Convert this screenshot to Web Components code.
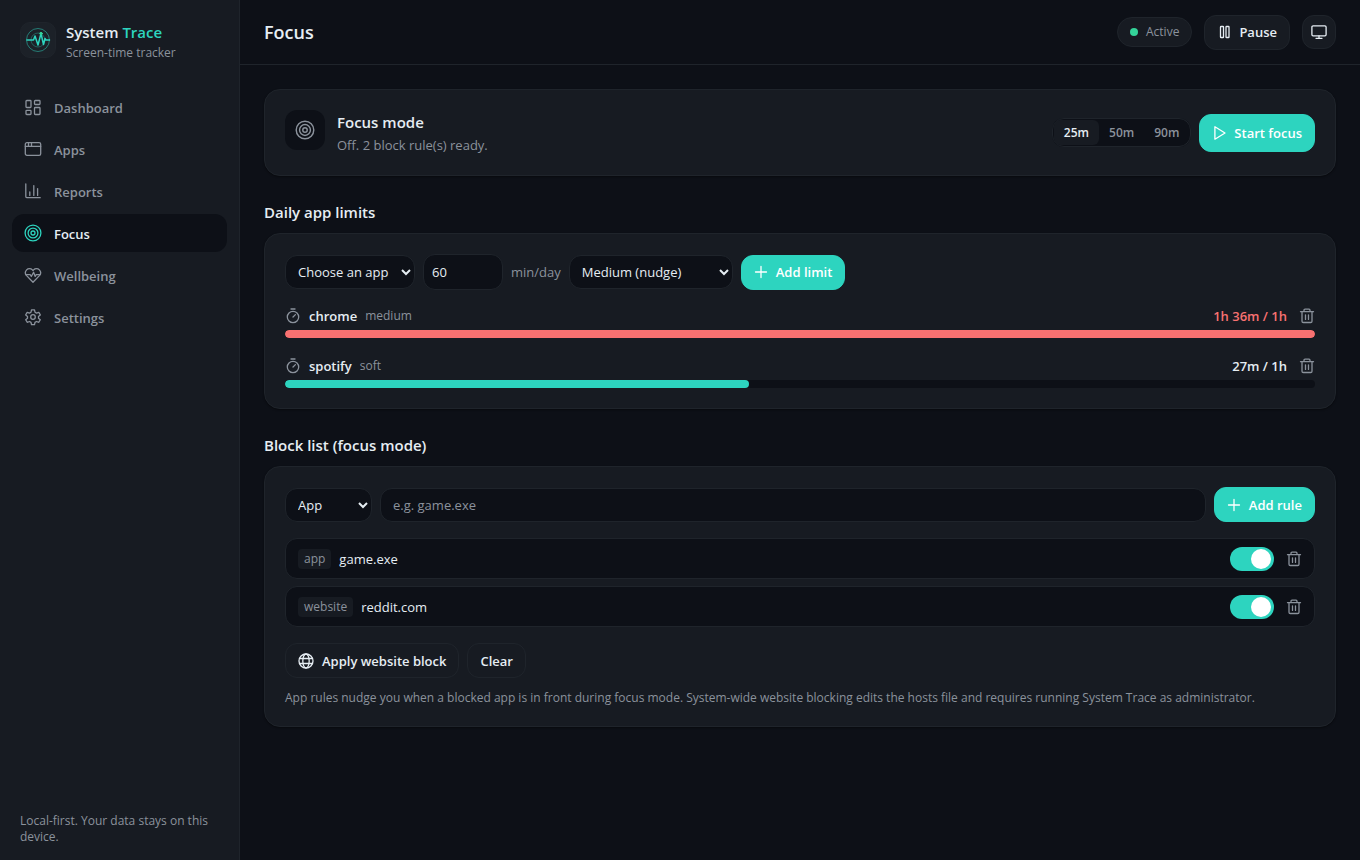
<!DOCTYPE html>
<html lang="en">
<head>
<meta charset="utf-8">
<meta name="viewport" content="width=device-width, initial-scale=1">
<title>System Trace – Focus</title>
<style>
  :root {
    color-scheme: dark;
    --bg: #0d1017;
    --panel: #171b22;
    --raised: #1c2128;
    --line: #1f242b;
    --text: #e6edf3;
    --muted: #8b929c;
    --accent: #2dd4bf;
    --danger: #f87171;
    --fs-sm: 12px;
    --fs-md: 13px;
    --fs-lg: 15px;
    --fs-xl: 18px;
  }
  body {
    margin: 0;
    background: var(--bg);
    color: var(--text);
    font: 400 13px/20px "Open Sans", "Noto Sans", sans-serif;
  }
</style>
</head>
<body>
<st-app></st-app>

<script>
const ICONS = {
  dashboard: [18, '<rect x="2" y="2.5" width="5" height="7" rx=".8"/><rect x="10.5" y="2.5" width="5.5" height="4" rx=".8"/><rect x="2" y="12.3" width="5" height="4.2" rx=".8"/><rect x="10.5" y="9.5" width="5.5" height="7" rx=".8"/>'],
  apps: [18, '<rect x="1.3" y="2.7" width="15.4" height="12.6" rx="1.6"/><path d="M1.3 6.3h15.4M4.5 2.9v3.2M7.5 2.9v3.2"/>'],
  reports: [18, '<path d="M1.8 2v12.4a1.3 1.3 0 0 0 1.3 1.3H16.2M5.8 10v3.4M9.8 3.6v9.8M13.6 6.6v6.8"/>'],
  target: [18, '<circle cx="9" cy="9" r="7.9"/><circle cx="9" cy="9" r="4.9"/><circle cx="9" cy="9" r="2"/>'],
  heart: [18, '<path d="M9 16.2 2.6 9.6a4.2 4.2 0 0 1 0-5.7 4 4 0 0 1 5.8 0L9 4.6l.6-.7a4 4 0 0 1 5.8 0 4.2 4.2 0 0 1 0 5.7z"/><path d="M1.8 8.7h4.5l1 1.8 2.3-4.3 1.6 4.2.9-1.7h4"/>'],
  gear: [18, '<circle cx="9" cy="9" r="2.3"/><path d="M7.5 1.9h3l.5 2.3 1.5.9 2.3-.8 1.5 2.6-1.8 1.5v1.8l1.8 1.5-1.5 2.6-2.3-.8-1.5.9-.5 2.3h-3L7 14.4l-1.5-.9-2.3.8-1.5-2.6 1.8-1.5V8.4L1.7 6.9l1.5-2.6 2.3.8L7 4.2z"/>'],
  pause: [16, '<rect x="3.5" y="2.5" width="3" height="11" rx=".6"/><rect x="9" y="2.5" width="3" height="11" rx=".6"/>'],
  monitor: [16, '<rect x=".9" y="1.8" width="14.2" height="10" rx="1.2"/><path d="M8 11.8v2.4M5 14.3h6"/>'],
  play: [16, '<path d="M2.9 1.8v12.4L13 8z"/>'],
  plus: [14, '<path d="M7 1.5v11M1.5 7h11"/>'],
  timer: [16, '<circle cx="8" cy="9" r="5.7"/><path d="m8 9 2.4-2.4M6 1h4"/>'],
  trash: [16, '<path d="M1.5 3.7h13M5 3.5V2.2c0-.6.4-1 1-1h4c.6 0 1 .4 1 1v1.3M3 3.9v9.3c0 .8.5 1.3 1.3 1.3h7.4c.8 0 1.3-.5 1.3-1.3V3.9M6.5 6.8v4.6M9.5 6.8v4.6"/>'],
  globe: [16, '<circle cx="8" cy="8" r="7"/><ellipse cx="8" cy="8" rx="3.2" ry="7"/><path d="M1.5 5.5h13M1.5 10.5h13"/>']
};

function define(name, markup, setup) {
  const template = document.createElement('template');
  template.innerHTML = markup;
  customElements.define(name, class extends HTMLElement {
    constructor() {
      super();
      this.attachShadow({ mode: 'open' }).append(template.content.cloneNode(true));
    }
    connectedCallback() {
      if (setup && !this.ready) { this.ready = true; setup(this, this.shadowRoot); }
    }
  });
}

define('st-icon', `
  <style>
    :host { display: inline-flex; flex: none; }
    svg { display: block; fill: none; stroke: currentColor; stroke-width: 1.3; stroke-linejoin: round; stroke-linecap: round; }
  </style>
  <svg aria-hidden="true"></svg>`, (el, root) => {
  const [box, shape] = ICONS[el.getAttribute('name')];
  const size = el.getAttribute('size') || box;
  const svg = root.querySelector('svg');
  svg.setAttribute('viewBox', `0 0 ${box} ${box}`);
  svg.setAttribute('width', size);
  svg.setAttribute('height', size);
  svg.innerHTML = shape;
});

define('st-button', `
  <style>
    :host { display: inline-flex; flex: none; }
    button {
      display: flex; align-items: center; justify-content: center; gap: 8px;
      box-sizing: border-box; height: 35px; padding: 0 12px; margin: 0;
      border: 1px solid var(--line); border-radius: 12px;
      background: var(--panel); color: var(--text);
      font: 600 var(--fs-md)/20px "Open Sans", "Noto Sans", sans-serif; white-space: nowrap; cursor: pointer;
    }
    :host([kind="primary"]) button { background: var(--accent); border-color: var(--accent); color: #fff; }
    :host([size="large"]) button { height: 38px; }
    :host([tight]) button { gap: 6px; }
    :host([kind="square"]) button { width: 34px; height: 34px; padding: 0; }
    :host([kind="bare"]) button { height: 16px; padding: 0; border: 0; background: none; color: var(--muted); }
  </style>
  <button type="button"><slot></slot></button>`, (el, root) => {
  if (el.title) root.querySelector('button').setAttribute('aria-label', el.title);
});

define('st-nav-item', `
  <style>
    :host { display: block; }
    a {
      display: flex; align-items: center; gap: 12px; height: 38px; padding: 0 12px;
      border-radius: 12px; color: var(--muted); text-decoration: none;
      font-size: var(--fs-md); font-weight: 600;
    }
    :host([active]) a { background: var(--bg); color: var(--text); }
    :host([active]) st-icon { color: var(--accent); }
    span { padding-top: 2px; }
  </style>
  <a href="#"><span><slot></slot></span></a>`, (el, root) => {
  const link = root.querySelector('a');
  const icon = document.createElement('st-icon');
  icon.setAttribute('name', el.getAttribute('icon'));
  link.prepend(icon);
  if (el.hasAttribute('active')) link.setAttribute('aria-current', 'page');
});

define('st-logo', `
  <style>
    :host { display: flex; align-items: center; justify-content: center; box-sizing: border-box; width: 36px; height: 36px; border-radius: 10px; background: var(--raised); border: 1px solid var(--line); }
  </style>
  <svg width="26" height="26" viewBox="0 0 26 26" fill="none" stroke="#2dd4bf" stroke-linecap="round" stroke-linejoin="round" aria-hidden="true">
    <circle cx="13" cy="13" r="11.5" opacity=".5"/>
    <circle cx="13" cy="13" r="7" opacity=".35"/>
    <path d="M2 13h6.5L10 9l3 9 3-11.500 2.500 11L20 11.500l1 1.500h3.500" stroke-width="1.5"/>
    <circle cx="16" cy="6.5" r="1.2" fill="#34d399" stroke="#34d399"/>
  </svg>`);

define('st-sidebar', `
  <style>
    :host { display: flex; flex-direction: column; box-sizing: border-box; background: var(--panel); border-right: 1px solid var(--line); }
    .brand { display: flex; gap: 10px; padding: 22px 20px 30px; }
    .brand > div { height: 36px; }
    strong { display: block; font-size: var(--fs-lg); line-height: 21px; font-weight: 600; }
    em { font-style: normal; color: var(--accent); }
    small { display: block; font-size: var(--fs-sm); line-height: 20px; font-weight: 500; color: var(--muted); }
    nav { display: grid; gap: 4px; padding: 0 12px; }
    footer { margin-top: auto; padding: 0 20px 15px; font-size: var(--fs-sm); line-height: 16px; font-weight: 500; color: var(--muted); }
  </style>
  <div class="brand">
    <st-logo></st-logo>
    <div><strong>System <em>Trace</em></strong><small>Screen-time tracker</small></div>
  </div>
  <nav aria-label="Main">
    <st-nav-item icon="dashboard">Dashboard</st-nav-item>
    <st-nav-item icon="apps">Apps</st-nav-item>
    <st-nav-item icon="reports">Reports</st-nav-item>
    <st-nav-item icon="target" active>Focus</st-nav-item>
    <st-nav-item icon="heart">Wellbeing</st-nav-item>
    <st-nav-item icon="gear">Settings</st-nav-item>
  </nav>
  <footer>Local-first. Your data stays on this device.</footer>`);

define('st-topbar', `
  <style>
    :host { display: flex; align-items: center; gap: 12px; box-sizing: border-box; height: 65px; padding: 0 24px; border-bottom: 1px solid var(--line); }
    h1 { margin: 0 auto 0 0; font-size: var(--fs-xl); line-height: 24px; font-weight: 600; }
    .status { display: flex; align-items: center; gap: 8px; box-sizing: border-box; height: 30px; padding: 0 12px; border: 1px solid var(--line); border-radius: 15px; background: var(--panel); color: var(--muted); font-size: var(--fs-sm); font-weight: 500; }
    .status i { width: 8px; height: 8px; border-radius: 50%; background: #34d399; }
  </style>
  <h1>Focus</h1>
  <div class="status" role="status"><i></i><span>Active</span></div>
  <st-button tight><st-icon name="pause"></st-icon><span>Pause</span></st-button>
  <st-button kind="square" title="Mini window"><st-icon name="monitor"></st-icon></st-button>`);

define('st-card', `
  <style>
    :host { display: block; box-sizing: border-box; padding: 20px; background: var(--panel); border: 1px solid var(--line); border-radius: 16px; box-shadow: 0 1px 2px #0006; }
  </style>
  <slot></slot>`);

define('st-segments', `
  <style>
    :host { display: block; }
    fieldset { display: flex; margin: 0; padding: 1px; min-width: 0; border: 1px solid var(--line); border-radius: 12px; background: var(--bg); }
    label { position: relative; padding: 0 10px; border-radius: 6px; font-size: var(--fs-sm); line-height: 25px; font-weight: 600; color: var(--muted); cursor: pointer; }
    input { position: absolute; inset: 0; margin: 0; opacity: 0; }
    label:has(:checked) { background: var(--panel); color: var(--text); }
  </style>
  <fieldset aria-label="Focus length">
    <label><input type="radio" name="len" checked>25m</label>
    <label><input type="radio" name="len">50m</label>
    <label><input type="radio" name="len">90m</label>
  </fieldset>`);

define('st-focus-mode', `
  <style>
    :host { display: block; }
    .row { display: flex; align-items: center; gap: 8px; }
    .info { display: flex; gap: 12px; margin-right: auto; }
    .badge { display: flex; align-items: center; justify-content: center; width: 40px; height: 40px; border-radius: 12px; background: var(--bg); color: var(--muted); }
    h2 { margin: 0; font-size: var(--fs-lg); line-height: 25px; font-weight: 600; }
    p { margin: 0; font-size: var(--fs-md); line-height: 20px; color: var(--muted); }
  </style>
  <st-card><div class="row">
    <div class="info">
      <div class="badge"><st-icon name="target" size="20"></st-icon></div>
      <div><h2>Focus mode</h2><p>Off. 2 block rule(s) ready.</p></div>
    </div>
    <st-segments></st-segments>
    <st-button kind="primary" size="large" tight><st-icon name="play"></st-icon><span>Start focus</span></st-button>
  </div></st-card>`);

define('st-limit', `
  <style>
    :host { display: block; }
    .head { display: flex; align-items: center; gap: 8px; height: 20px; margin-bottom: 4px; }
    st-icon { color: var(--muted); }
    b { font-size: var(--fs-md); font-weight: 600; }
    .level { font-size: var(--fs-sm); font-weight: 500; color: var(--muted); margin-right: auto; }
    .used { margin-right: 4px; }
    .track { height: 8px; border-radius: 4px; background: var(--bg); overflow: hidden; }
    .fill { height: 100%; border-radius: 4px; background: var(--accent); }
    :host([over]) .fill { background: var(--danger); }
    :host([over]) .used { color: var(--danger); }
  </style>
  <div class="head"><st-icon name="timer"></st-icon><b class="name"></b><span class="level"></span><b class="used"></b><st-button kind="bare" title="Delete limit"><st-icon name="trash"></st-icon></st-button></div>
  <div class="track" role="progressbar" aria-label="Time used"><div class="fill"></div></div>`, (el, root) => {
  root.querySelector('.name').textContent = el.getAttribute('name');
  root.querySelector('.level').textContent = el.getAttribute('level');
  root.querySelector('.used').textContent = el.getAttribute('used');
  root.querySelector('.track').setAttribute('aria-valuenow', el.getAttribute('percent'));
  root.querySelector('.fill').style.width = el.getAttribute('percent') + '%';
});

const FIELD_CSS = `
  .fields { display: flex; align-items: center; gap: 8px; }
  select, input { box-sizing: border-box; height: 34px; margin: 0; border: 1px solid var(--line); border-radius: 12px; background: var(--bg); color: var(--text); font: 400 var(--fs-md)/20px "Open Sans", "Noto Sans", sans-serif; }
  select { padding: 0 0 0 8px; }
  input { padding: 0 12px; }
  input::placeholder { color: var(--muted); opacity: 1; }
`;

define('st-limits', `
  <style>
    :host { display: block; }
    ${FIELD_CSS}
    .fields { height: 36px; margin-bottom: 16px; }
    label { color: var(--muted); }
    #app { width: 130px; }
    #minutes { width: 80px; height: 36px; padding: 0 8px; }
    #level { width: 164px; }
    .list { display: grid; gap: 18px; }
  </style>
  <st-card>
    <div class="fields">
      <select id="app" aria-label="App"><option>Choose an app</option></select>
      <input id="minutes" type="number" value="60"><label for="minutes">min/day</label>
      <select id="level" aria-label="Limit level"><option>Medium (nudge)</option></select>
      <st-button kind="primary"><st-icon name="plus"></st-icon><span>Add limit</span></st-button>
    </div>
    <div class="list">
      <st-limit name="chrome" level="medium" used="1h 36m / 1h" percent="100" over></st-limit>
      <st-limit name="spotify" level="soft" used="27m / 1h" percent="45"></st-limit>
    </div>
  </st-card>`);

define('st-rule', `
  <style>
    :host { display: flex; align-items: center; gap: 8px; box-sizing: border-box; height: 41px; padding: 0 12px; border: 1px solid var(--line); border-radius: 12px; background: var(--bg); }
    .kind { padding: 0 6px; border-radius: 4px; background: var(--panel); color: var(--muted); font-size: var(--fs-sm); line-height: 20px; font-weight: 500; }
    label { margin-right: auto; }
    input { appearance: none; display: flex; align-items: center; justify-content: flex-end; box-sizing: border-box; width: 44px; height: 24px; margin: 0 4px 0 0; padding: 3px; border-radius: 12px; background: var(--accent); cursor: pointer; }
    input:not(:checked) { justify-content: flex-start; background: var(--raised); }
    input::before { content: ""; width: 20px; height: 20px; border-radius: 50%; background: #fff; }
  </style>
  <span class="kind"></span><label for="on"></label>
  <input id="on" type="checkbox" role="switch" checked>
  <st-button kind="bare" title="Delete rule"><st-icon name="trash"></st-icon></st-button>`, (el, root) => {
  root.querySelector('.kind').textContent = el.getAttribute('kind');
  root.querySelector('label').textContent = el.getAttribute('target');
});

define('st-blocklist', `
  <style>
    :host { display: block; }
    ${FIELD_CSS}
    #type { width: 87px; }
    #value { flex: 1; min-width: 0; }
    .list { display: grid; gap: 7px; margin: 16px 0; }
    .actions { display: flex; gap: 8px; }
    p { margin: 12px 0 0; font-size: var(--fs-sm); line-height: 16px; font-weight: 500; color: var(--muted); }
  </style>
  <st-card>
    <div class="fields">
      <select id="type" aria-label="Rule type"><option>App</option><option>Website</option></select>
      <input id="value" type="text" placeholder="e.g. game.exe" aria-label="App or website">
      <st-button kind="primary"><st-icon name="plus"></st-icon><span>Add rule</span></st-button>
    </div>
    <div class="list">
      <st-rule kind="app" target="game.exe"></st-rule>
      <st-rule kind="website" target="reddit.com"></st-rule>
    </div>
    <div class="actions">
      <st-button><st-icon name="globe"></st-icon><span>Apply website block</span></st-button>
      <st-button>Clear</st-button>
    </div>
    <p>App rules nudge you when a blocked app is in front during focus mode. System-wide website blocking edits the hosts file and requires running System Trace as administrator.</p>
  </st-card>`);

define('st-app', `
  <style>
    :host { display: grid; grid-template-columns: 240px minmax(0, 1fr); min-height: 100vh; }
    main { padding: 24px; }
    h2 { margin: 24px 0 8px; font-size: var(--fs-lg); line-height: 25px; font-weight: 600; }
  </style>
  <st-sidebar></st-sidebar>
  <div>
    <st-topbar></st-topbar>
    <main>
      <st-focus-mode></st-focus-mode>
      <h2>Daily app limits</h2>
      <st-limits></st-limits>
      <h2>Block list (focus mode)</h2>
      <st-blocklist></st-blocklist>
    </main>
  </div>`);
</script>
</body>
</html>
